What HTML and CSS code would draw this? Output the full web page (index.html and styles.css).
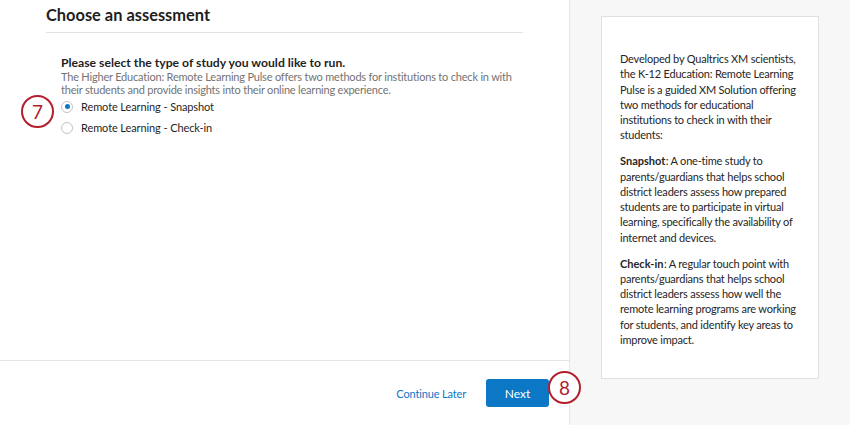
FILE: index.html
```html
<!DOCTYPE html>
<html>
<head>
<meta charset="utf-8">
<link rel="stylesheet" href="styles.css">
</head>
<body>
<div class="app">
  <main class="main">
    <div class="content">
      <h1 class="title">Choose an assessment</h1>
      <div class="question">
        <div class="q-title">Please select the type of study you would like to run.</div>
        <div class="q-desc">The Higher Education: Remote Learning Pulse offers two methods for institutions to check in with their students and provide insights into their online learning experience.</div>
        <label class="radio-row"><span class="radio checked"></span><span class="radio-label">Remote Learning - Snapshot</span></label>
        <label class="radio-row"><span class="radio"></span><span class="radio-label">Remote Learning - Check-in</span></label>
      </div>
      <div class="callout c7">7</div>
    </div>
    <footer class="footer">
      <a class="link">Continue Later</a>
      <button class="btn">Next</button>
      <div class="callout c8">8</div>
    </footer>
  </main>
  <aside class="side">
    <div class="card">
      <p>Developed by Qualtrics XM scientists, the K-12 Education: Remote Learning Pulse is a guided XM Solution offering two methods for educational institutions to check in with their students:</p>
      <p><b>Snapshot</b>: A one-time study to parents/guardians that helps school district leaders assess how prepared students are to participate in virtual learning, specifically the availability of internet and devices.</p>
      <p><b>Check-in</b>: A regular touch point with parents/guardians that helps school district leaders assess how well the remote learning programs are working for students, and identify key areas to improve impact.</p>
    </div>
  </aside>
</div>
</body>
</html>
```
FILE: styles.css
```css
* { box-sizing: border-box; }
html, body { margin: 0; padding: 0; }
body {
  width: 850px;
  height: 425px;
  overflow: hidden;
  font-family: "Lato", "Open Sans", sans-serif;
  color: #1f1f1f;
  background: #fff;
}
.app {
  display: flex;
  height: 425px;
}
.main {
  width: 569px;
  display: flex;
  flex-direction: column;
  background: #fff;
}
.content {
  position: relative;
  flex: 1;
  padding: 0 46px;
}
.title {
  margin: 0;
  font-size: 16.4px;
  font-weight: 700;
  line-height: 20px;
  padding: 5px 0 7px;
  border-bottom: 1px solid #e3e3e3;
}
.question {
  padding: 22px 0 0 15px;
}
.q-title {
  font-size: 12.2px;
  font-weight: 700;
  line-height: 15px;
}
.q-desc {
  font-size: 11px;
  letter-spacing: -0.2px;
  line-height: 13px;
  color: #737373;
  margin-bottom: 0;
}
.radio-row {
  display: flex;
  align-items: center;
  height: 21px;
  font-size: 11px;
  letter-spacing: -0.1px;
}
.radio {
  width: 12px;
  height: 12px;
  border-radius: 50%;
  border: 1px solid #c4c4c4;
  background: #fff;
  margin-right: 8px;
  position: relative;
}
.radio.checked::after {
  content: "";
  position: absolute;
  left: 2.5px;
  top: 2.5px;
  width: 5px;
  height: 5px;
  border-radius: 50%;
  background: #0b77c7;
}
.footer {
  position: relative;
  height: 65px;
  border-top: 1px solid #e5e5e5;
  display: flex;
  align-items: center;
  justify-content: flex-end;
  gap: 20px;
  padding-right: 20px;
}
.link {
  color: #0b77c5;
  font-size: 11px;
  letter-spacing: -0.15px;
}
.btn {
  width: 63px;
  height: 28px;
  border: 0;
  border-radius: 3px;
  background: #0b77c5;
  color: #fff;
  font-family: inherit;
  font-size: 12px;
}
.callout {
  position: absolute;
  width: 33px;
  height: 33px;
  border-radius: 50%;
  border: 2.5px solid #b31e2c;
  background: #fff;
  color: #b31e2c;
  font-size: 19px;
  display: flex;
  align-items: center;
  justify-content: center;
  line-height: 1;
}
.c7 { left: 21px; top: 95px; }
.c8 { left: 548px; top: 10px; }
.side {
  flex: 1;
  background: #f7f7f7;
  border-left: 1px solid #e6e6e6;
  padding: 16px 31px 46px 31px;
}
.card {
  height: 363px;
  background: #fff;
  border: 1px solid #e0e0e0;
  padding: 34px 18px 0 18px;
  font-size: 11px;
  letter-spacing: -0.2px;
  line-height: 15.3px;
  color: #262626;
}
.card p { margin: 0 0 10.5px; }
.card b { font-weight: 700; letter-spacing: 0; padding-right: 0.5px; }
```
